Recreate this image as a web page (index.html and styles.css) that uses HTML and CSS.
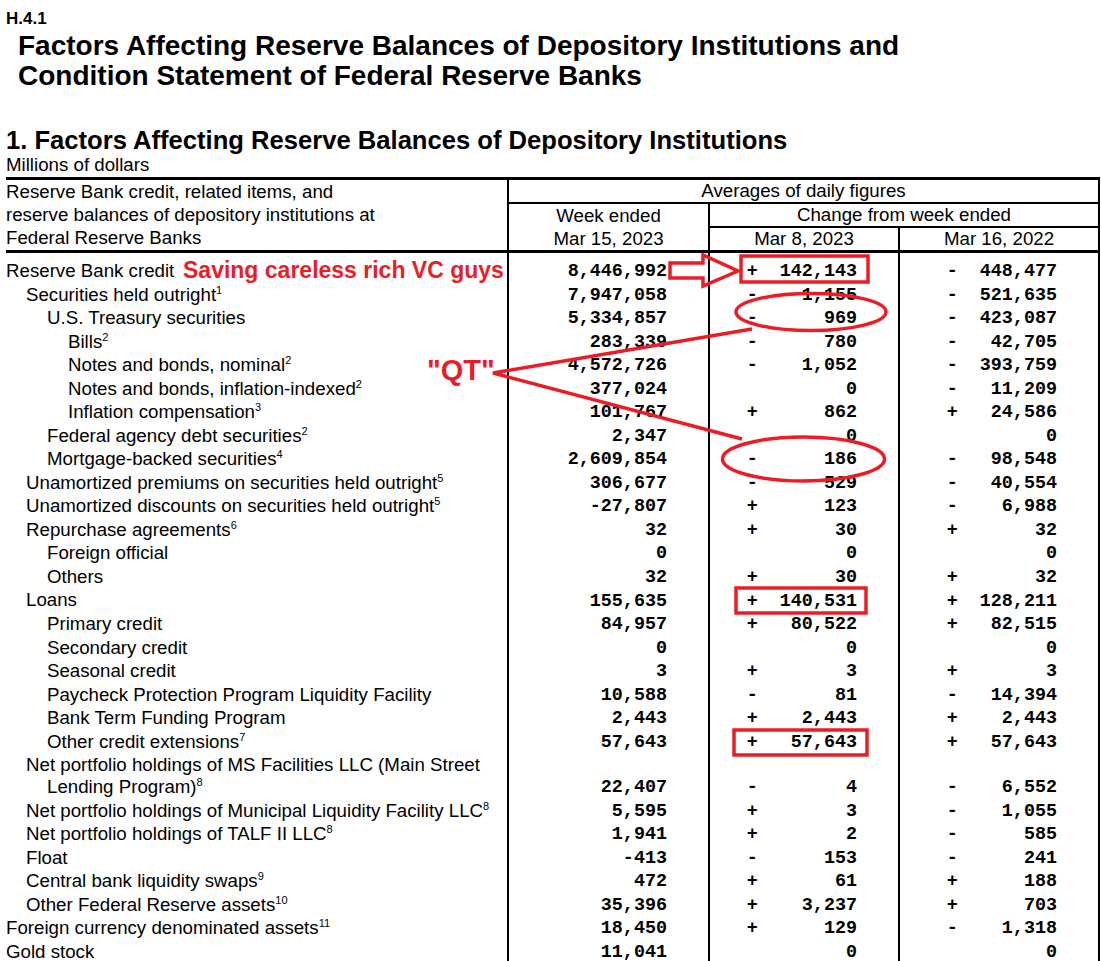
FILE: index.html
```html
<!DOCTYPE html>
<html lang="en">
<head>
<meta charset="utf-8">
<title>H.4.1 Factors Affecting Reserve Balances</title>
<link rel="stylesheet" href="styles.css">
</head>
<body>
<div class="page">
  <div class="code">H.4.1</div>
  <h1 class="title">Factors Affecting Reserve Balances of Depository Institutions and<br>Condition Statement of Federal Reserve Banks</h1>
  <h2 class="section">1. Factors Affecting Reserve Balances of Depository Institutions</h2>
  <div class="units">Millions of dollars</div>
  <table class="h41">
    <colgroup>
      <col class="w1"><col class="w2"><col class="w3"><col class="w4">
    </colgroup>
    <thead>
      <tr>
        <th rowspan="3" class="hlabel">Reserve Bank credit, related items, and<br>reserve balances of depository institutions at<br>Federal Reserve Banks</th>
        <th colspan="3" class="hgroup">Averages of daily figures</th>
      </tr>
      <tr>
        <th rowspan="2" class="hweek">Week ended<br>Mar 15, 2023</th>
        <th colspan="2" class="hgroup">Change from week ended</th>
      </tr>
      <tr>
        <th class="hdate hsep">Mar 8, 2023</th>
        <th class="hdate">Mar 16, 2022</th>
      </tr>
    </thead>
    <tbody>
      <tr class="first"><td class="lab l0">Reserve Bank credit</td><td class="num">8,446,992</td><td class="num sep">+  142,143</td><td class="num">-  448,477</td></tr>
      <tr><td class="lab l1">Securities held outright<sup>1</sup></td><td class="num">7,947,058</td><td class="num sep">-    1,155</td><td class="num">-  521,635</td></tr>
      <tr><td class="lab l2">U.S. Treasury securities</td><td class="num">5,334,857</td><td class="num sep">-      969</td><td class="num">-  423,087</td></tr>
      <tr><td class="lab l3">Bills<sup>2</sup></td><td class="num">283,339</td><td class="num sep">-      780</td><td class="num">-   42,705</td></tr>
      <tr><td class="lab l3">Notes and bonds, nominal<sup>2</sup></td><td class="num">4,572,726</td><td class="num sep">-    1,052</td><td class="num">-  393,759</td></tr>
      <tr><td class="lab l3">Notes and bonds, inflation-indexed<sup>2</sup></td><td class="num">377,024</td><td class="num sep">0</td><td class="num">-   11,209</td></tr>
      <tr><td class="lab l3">Inflation compensation<sup>3</sup></td><td class="num">101,767</td><td class="num sep">+      862</td><td class="num">+   24,586</td></tr>
      <tr><td class="lab l2">Federal agency debt securities<sup>2</sup></td><td class="num">2,347</td><td class="num sep">0</td><td class="num">0</td></tr>
      <tr><td class="lab l2">Mortgage-backed securities<sup>4</sup></td><td class="num">2,609,854</td><td class="num sep">-      186</td><td class="num">-   98,548</td></tr>
      <tr><td class="lab l1">Unamortized premiums on securities held outright<sup>5</sup></td><td class="num">306,677</td><td class="num sep">-      529</td><td class="num">-   40,554</td></tr>
      <tr><td class="lab l1">Unamortized discounts on securities held outright<sup>5</sup></td><td class="num">-27,807</td><td class="num sep">+      123</td><td class="num">-    6,988</td></tr>
      <tr><td class="lab l1">Repurchase agreements<sup>6</sup></td><td class="num">32</td><td class="num sep">+       30</td><td class="num">+       32</td></tr>
      <tr><td class="lab l2">Foreign official</td><td class="num">0</td><td class="num sep">0</td><td class="num">0</td></tr>
      <tr><td class="lab l2">Others</td><td class="num">32</td><td class="num sep">+       30</td><td class="num">+       32</td></tr>
      <tr><td class="lab l1">Loans</td><td class="num">155,635</td><td class="num sep">+  140,531</td><td class="num">+  128,211</td></tr>
      <tr><td class="lab l2">Primary credit</td><td class="num">84,957</td><td class="num sep">+   80,522</td><td class="num">+   82,515</td></tr>
      <tr><td class="lab l2">Secondary credit</td><td class="num">0</td><td class="num sep">0</td><td class="num">0</td></tr>
      <tr><td class="lab l2">Seasonal credit</td><td class="num">3</td><td class="num sep">+        3</td><td class="num">+        3</td></tr>
      <tr><td class="lab l2">Paycheck Protection Program Liquidity Facility</td><td class="num">10,588</td><td class="num sep">-       81</td><td class="num">-   14,394</td></tr>
      <tr><td class="lab l2">Bank Term Funding Program</td><td class="num">2,443</td><td class="num sep">+    2,443</td><td class="num">+    2,443</td></tr>
      <tr><td class="lab l2">Other credit extensions<sup>7</sup></td><td class="num">57,643</td><td class="num sep">+   57,643</td><td class="num">+   57,643</td></tr>
      <tr><td class="lab l1 hang">Net portfolio holdings of MS Facilities LLC (Main Street<br>Lending Program)<sup>8</sup></td><td class="num">22,407</td><td class="num sep">-        4</td><td class="num">-    6,552</td></tr>
      <tr><td class="lab l1">Net portfolio holdings of Municipal Liquidity Facility LLC<sup>8</sup></td><td class="num">5,595</td><td class="num sep">+        3</td><td class="num">-    1,055</td></tr>
      <tr><td class="lab l1">Net portfolio holdings of TALF II LLC<sup>8</sup></td><td class="num">1,941</td><td class="num sep">+        2</td><td class="num">-      585</td></tr>
      <tr><td class="lab l1">Float</td><td class="num">-413</td><td class="num sep">-      153</td><td class="num">-      241</td></tr>
      <tr><td class="lab l1">Central bank liquidity swaps<sup>9</sup></td><td class="num">472</td><td class="num sep">+       61</td><td class="num">+      188</td></tr>
      <tr><td class="lab l1">Other Federal Reserve assets<sup>10</sup></td><td class="num">35,396</td><td class="num sep">+    3,237</td><td class="num">+      703</td></tr>
      <tr><td class="lab l0">Foreign currency denominated assets<sup>11</sup></td><td class="num">18,450</td><td class="num sep">+      129</td><td class="num">-    1,318</td></tr>
      <tr><td class="lab l0">Gold stock</td><td class="num">11,041</td><td class="num sep">0</td><td class="num">0</td></tr>
    </tbody>
  </table>
</div>

<div class="note note-vc">Saving careless rich VC guys</div>
<div class="note note-qt">"QT"</div>

<svg class="marks" width="1101" height="961" viewBox="0 0 1101 961" aria-hidden="true">
  <g fill="none" stroke="#ed1c24" stroke-width="3.5">
    <polygon points="670,263 703,263 703,255 738,271 703,286 703,278 670,278"/>
    <rect x="741" y="256" width="127" height="26"/>
    <ellipse cx="811" cy="312" rx="75" ry="18.5"/>
    <ellipse cx="803.5" cy="459" rx="81" ry="22"/>
    <polyline points="752,329 493,373 742,439"/>
    <rect x="736" y="588" width="130" height="25"/>
    <rect x="734" y="730" width="133" height="25"/>
  </g>
</svg>
</body>
</html>
```
FILE: styles.css
```css
html, body {
  margin: 0;
  padding: 0;
  background: #fff;
}

body {
  position: relative;
  width: 1101px;
  height: 961px;
  overflow: hidden;
  color: #000;
  font-family: "Liberation Sans", Arial, sans-serif;
}

.page {
  padding: 9px 0 0 6px;
}

.code {
  font-weight: bold;
  font-size: 17px;
  line-height: 20px;
}

.title {
  margin: 2px 0 0 12px;
  font-size: 28px;
  line-height: 30px;
  font-weight: bold;
}

.section {
  margin: 35px 0 0 0;
  font-size: 25.6px;
  line-height: 28px;
  font-weight: bold;
}

.units {
  font-size: 18.7px;
  line-height: 22px;
}

.h41 {
  margin-top: 1px;
  border-collapse: collapse;
  table-layout: fixed;
  width: 1093px;
  border-top: 3px solid #000;
  border-right: 2px solid #000;
  font-size: 18.7px;
}

.w1 { width: 502px; }
.w2 { width: 201px; }
.w3 { width: 190px; }
.w4 { width: 200px; }

.h41 th {
  padding: 0;
  font-weight: normal;
  line-height: 22px;
  text-align: center;
  vertical-align: top;
}

.h41 thead {
  border-bottom: 3px solid #000;
}

.h41 .hlabel {
  text-align: left;
  line-height: 23px;
  border-right: 2px solid #000;
}

.h41 .hgroup {
  border-bottom: 2px solid #000;
}

.h41 .hweek {
  line-height: 23px;
  border-right: 2px solid #000;
}

.h41 .hsep {
  border-right: 2px solid #000;
}

.h41 td {
  padding: 0.77px 0;
  line-height: 22px;
  vertical-align: bottom;
}

.h41 tr.first td {
  padding-top: 7px;
}

.lab {
  border-right: 2px solid #000;
  white-space: nowrap;
}

.l0 { padding-left: 0; }
.l1 { padding-left: 20px !important; }
.l2 { padding-left: 41px !important; }
.l3 { padding-left: 62px !important; }

.hang {
  padding-left: 41px !important;
  text-indent: -21px;
}

.lab sup {
  font-size: 11px;
  line-height: 0;
  vertical-align: 7px;
}

.num {
  font-family: "Liberation Mono", "Courier New", monospace;
  font-size: 18.4px;
  line-height: 18.9px !important;
  font-weight: bold;
  text-align: right;
  white-space: pre;
  padding-right: 41px !important;
  border-right: 2px solid #000;
}

.note {
  position: absolute;
  color: #ed1c24;
  font-family: "Liberation Sans", Arial, sans-serif;
  font-weight: bold;
  white-space: nowrap;
}

.note-vc {
  left: 183px;
  top: 257px;
  font-size: 23px;
  line-height: 26px;
}

.note-qt {
  left: 427px;
  top: 354px;
  font-size: 29px;
  line-height: 32px;
}

.marks {
  position: absolute;
  left: 0;
  top: 0;
  pointer-events: none;
}
```
